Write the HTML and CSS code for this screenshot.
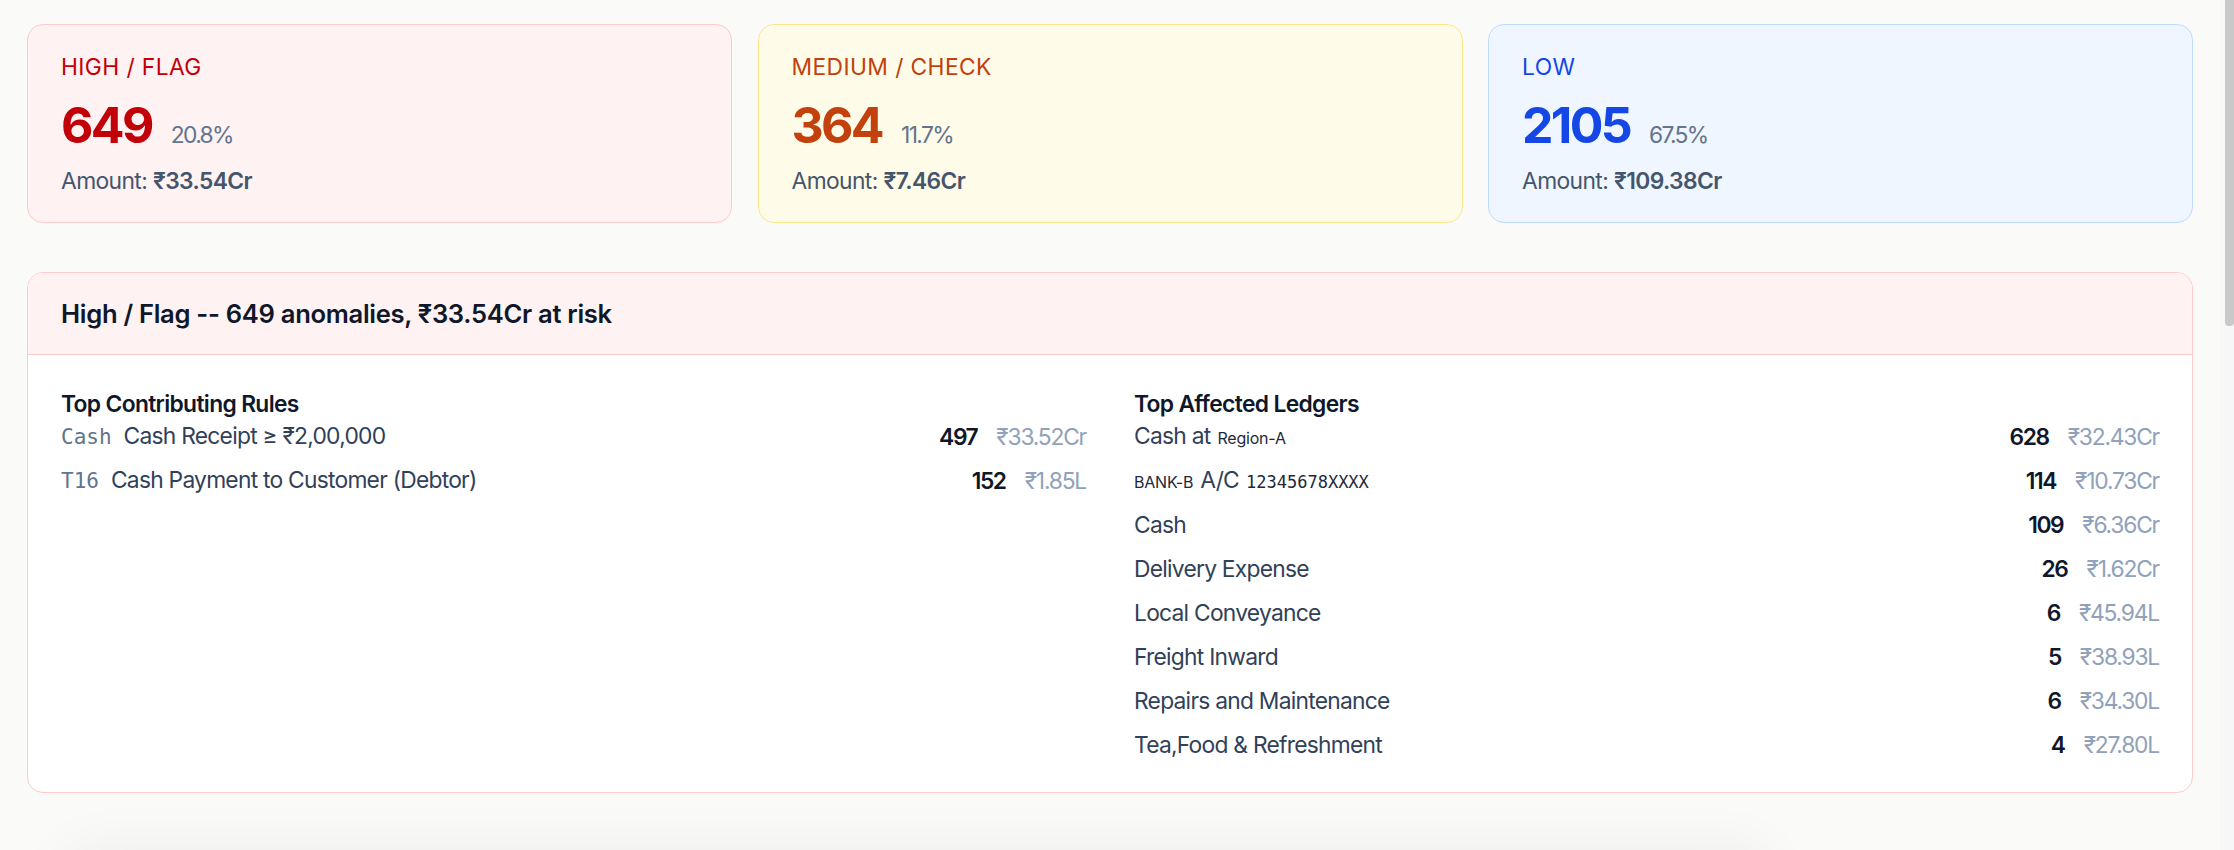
FILE: index.html
```html
<!DOCTYPE html>
<html lang="en">
<head>
<meta charset="utf-8">
<title>Anomaly severity summary</title>
<link rel="stylesheet" href="styles.css">
</head>
<body>
<main class="page">
  <div class="summary">
    <div class="sev-card sev-high">
      <div class="sev-label">HIGH / FLAG</div>
      <div class="sev-count-row"><span class="sev-count">649</span><span class="sev-pct">20.8%</span></div>
      <div class="sev-amount">Amount: <strong>₹33.54Cr</strong></div>
    </div>
    <div class="sev-card sev-medium">
      <div class="sev-label">MEDIUM / CHECK</div>
      <div class="sev-count-row"><span class="sev-count">364</span><span class="sev-pct">11.7%</span></div>
      <div class="sev-amount">Amount: <strong>₹7.46Cr</strong></div>
    </div>
    <div class="sev-card sev-low">
      <div class="sev-label">LOW</div>
      <div class="sev-count-row"><span class="sev-count">2105</span><span class="sev-pct">67.5%</span></div>
      <div class="sev-amount">Amount: <strong>₹109.38Cr</strong></div>
    </div>
  </div>

  <section class="detail">
    <header class="detail-head">
      <h2 class="detail-title">High / Flag -- 649 anomalies, ₹33.54Cr at risk</h2>
    </header>
    <div class="detail-body">
      <div class="col">
        <h3 class="col-title">Top Contributing Rules</h3>
        <ul class="rows">
          <li class="row">
            <span class="row-main"><span class="code">Cash</span><span class="name">Cash Receipt ≥ ₹2,00,000</span></span>
            <span class="row-stats"><span class="cnt">497</span><span class="amt">₹33.52Cr</span></span>
          </li>
          <li class="row">
            <span class="row-main"><span class="code">T16</span><span class="name">Cash Payment to Customer (Debtor)</span></span>
            <span class="row-stats"><span class="cnt">152</span><span class="amt">₹1.85L</span></span>
          </li>
        </ul>
      </div>
      <div class="col">
        <h3 class="col-title">Top Affected Ledgers</h3>
        <ul class="rows">
          <li class="row">
            <span class="row-main ledger"><span class="name">Cash at</span><span class="small">Region-A</span></span>
            <span class="row-stats"><span class="cnt">628</span><span class="amt">₹32.43Cr</span></span>
          </li>
          <li class="row">
            <span class="row-main ledger"><span class="small">BANK-B</span><span class="name">A/C</span><span class="small mono">12345678XXXX</span></span>
            <span class="row-stats"><span class="cnt">114</span><span class="amt">₹10.73Cr</span></span>
          </li>
          <li class="row">
            <span class="row-main"><span class="name">Cash</span></span>
            <span class="row-stats"><span class="cnt">109</span><span class="amt">₹6.36Cr</span></span>
          </li>
          <li class="row">
            <span class="row-main"><span class="name">Delivery Expense</span></span>
            <span class="row-stats"><span class="cnt">26</span><span class="amt">₹1.62Cr</span></span>
          </li>
          <li class="row">
            <span class="row-main"><span class="name">Local Conveyance</span></span>
            <span class="row-stats"><span class="cnt">6</span><span class="amt">₹45.94L</span></span>
          </li>
          <li class="row">
            <span class="row-main"><span class="name">Freight Inward</span></span>
            <span class="row-stats"><span class="cnt">5</span><span class="amt">₹38.93L</span></span>
          </li>
          <li class="row">
            <span class="row-main"><span class="name">Repairs and Maintenance</span></span>
            <span class="row-stats"><span class="cnt">6</span><span class="amt">₹34.30L</span></span>
          </li>
          <li class="row">
            <span class="row-main"><span class="name">Tea,Food &amp; Refreshment</span></span>
            <span class="row-stats"><span class="cnt">4</span><span class="amt">₹27.80L</span></span>
          </li>
        </ul>
      </div>
    </div>
  </section>

  <div class="next-card"></div>
</main>
<div class="scrollbar"><div class="thumb"></div></div>
</body>
</html>
```

FILE: styles.css
```css
* { box-sizing: border-box; }

html, body {
  margin: 0;
  height: 100%;
}

body {
  display: flex;
  overflow: hidden;
  background: #fafaf9;
  font-family: "Inter", "Noto Sans", "DejaVu Sans", sans-serif;
  color: #0f172a;
}

.page {
  flex: 1;
  min-width: 0;
  padding: 24px 27px 0;
  overflow: hidden;
  background: #fafaf9;
}

/* ---------- summary cards ---------- */
.summary {
  display: grid;
  grid-template-columns: repeat(3, 1fr);
  gap: 25.5px;
}

.sev-card {
  border: 1px solid;
  border-radius: 16px;
  padding: 28px 33px 26.5px;
}

.sev-high   { background: #fef2f2; border-color: #fecaca; }
.sev-medium { background: #fefce8; border-color: #fde68a; }
.sev-low    { background: #eff6ff; border-color: #bfdbfe; }

.sev-label {
  font-size: 22.8px;
  line-height: 28px;
  letter-spacing: 0.4px;
}
.sev-high .sev-label, .sev-high .sev-count { color: #c10007; }
.sev-medium .sev-label, .sev-medium .sev-count { color: #c2410c; }
.sev-low .sev-label, .sev-low .sev-count { color: #1447e6; }

.sev-count-row {
  display: flex;
  align-items: baseline;
  gap: 19px;
  margin-top: 19.4px;
}

.sev-count {
  font-size: 50px;
  line-height: 50px;
  font-weight: 700;
  letter-spacing: -2.7px;
}

.sev-pct {
  font-size: 22.8px;
  line-height: 28px;
  letter-spacing: -1.6px;
  color: #62748e;
}

.sev-amount {
  margin-top: 17px;
  font-size: 22.8px;
  line-height: 28px;
  letter-spacing: -0.6px;
  color: #45556c;
}
.sev-amount strong { font-weight: 600; }

/* ---------- detail panel ---------- */
.detail {
  margin-top: 49.5px;
  background: #ffffff;
  border: 1px solid #fecaca;
  border-radius: 16px;
  overflow: hidden;
}

.detail-head {
  background: #fef2f2;
  border-bottom: 1px solid #fecaca;
  padding: 22.5px 33px;
}

.detail-title {
  margin: 0;
  font-size: 25.6px;
  line-height: 36px;
  font-weight: 600;
  letter-spacing: -0.3px;
  color: #0f172a;
}

.detail-body {
  display: grid;
  grid-template-columns: 1fr 1fr;
  gap: 48px;
  padding: 37.5px 33px 25.4px;
}

.col-title {
  margin: 0;
  font-size: 22.8px;
  line-height: 22px;
  font-weight: 600;
  letter-spacing: -0.65px;
  color: #0f172a;
}

.rows {
  list-style: none;
  margin: 0;
  padding: 0;
}

.row {
  display: flex;
  align-items: center;
  justify-content: space-between;
  height: 44px;
}

.row-main {
  display: flex;
  align-items: baseline;
  gap: 12px;
  line-height: 32px;
}
.row-main.ledger { gap: 7px; }

.code {
  font-family: "DejaVu Sans Mono", "Liberation Mono", monospace;
  font-size: 21px;
  color: #62748e;
}

.name {
  font-size: 22.8px;
  letter-spacing: -0.75px;
  color: #314158;
}

.small {
  font-size: 16px;
  letter-spacing: -0.2px;
  color: #1e293b;
}
.small.mono {
  font-family: "DejaVu Sans Mono", "Liberation Mono", monospace;
  font-size: 17px;
  letter-spacing: 0;
}

.row-stats {
  display: flex;
  align-items: baseline;
  gap: 19px;
  line-height: 32px;
}

.cnt {
  font-size: 22.8px;
  font-weight: 600;
  letter-spacing: -1.4px;
  color: #0f172a;
}

.amt {
  font-size: 22.8px;
  letter-spacing: -1.2px;
  color: #90a1b9;
}

/* ---------- content continuing below the fold ---------- */
.next-card {
  margin: 70px 0 0 50px;
  width: 1680px;
  height: 1300px;
  background: #f4f4f5;
  border-radius: 16px;
  box-shadow: 0 0 60px 12px rgba(15, 23, 42, 0.06);
}

/* ---------- scrollbar ---------- */
.scrollbar {
  flex: 0 0 14px;
  background: #f7f7f7;
  padding-left: 5px;
}
.thumb {
  width: 9px;
  height: 326px;
  background: #c9c9c9;
  border-radius: 0 0 4px 4px;
}
```
